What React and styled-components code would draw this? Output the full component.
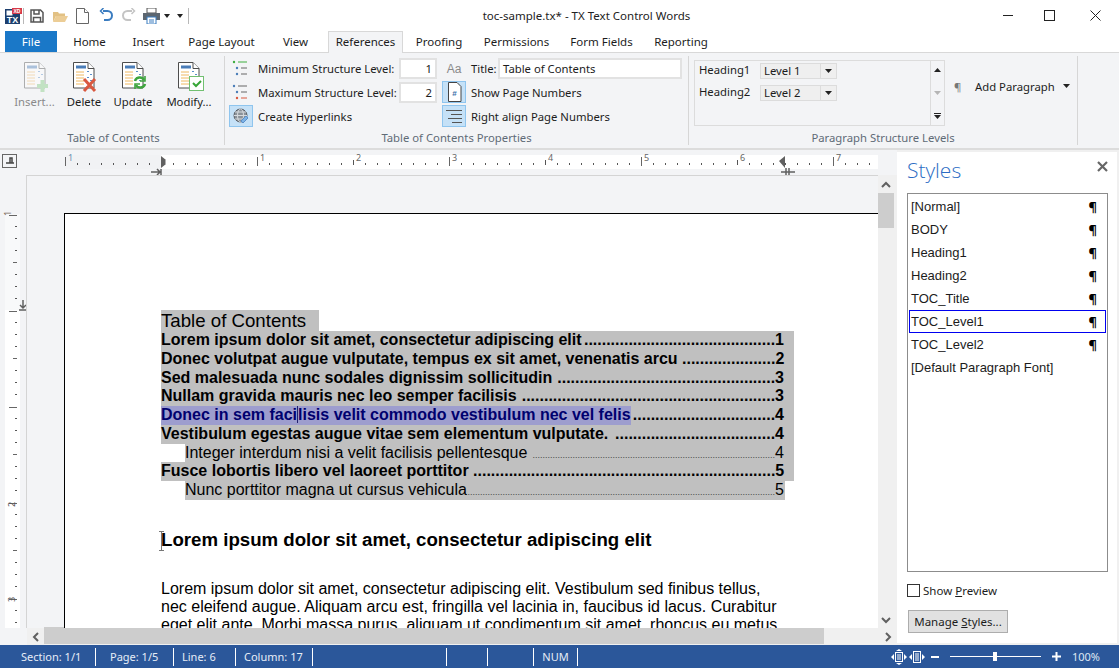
import React from 'react'
import styled, { createGlobalStyle } from 'styled-components'

const GlobalStyle = createGlobalStyle`
  html, body { margin: 0; padding: 0; background: #fff; }
  * { box-sizing: border-box; }
`

const uiFont = `"Noto Sans", "Open Sans", sans-serif`
const docFont = `"Liberation Sans", Arial, sans-serif`

const Window = styled.div`
  width: 1119px;
  height: 668px;
  display: flex;
  flex-direction: column;
  overflow: hidden;
  background: #fff;
  color: #1c1c1c;
  font-family: ${uiFont};
  font-size: 11.5px;
`

/* title bar */
const TitleBar = styled.div`
  height: 31px;
  flex: none;
  display: grid;
  grid-template-columns: 1fr auto 1fr;
  align-items: center;
`

const QuickAccess = styled.div`
  display: flex;
  align-items: center;
  padding-left: 5px;
  height: 100%;
`

const QuickIcon = styled.svg`
  display: block;
  flex: none;
  margin-right: ${p => p.$gap || 0}px;
`

const QuickSep = styled.div`
  width: 1px;
  height: 16px;
  background: #b8b8b8;
  margin: 0 6px 0 ${p => p.$left ?? 5}px;
`

const WindowTitle = styled.div`
  font-size: 11.5px;
  color: #222;
  white-space: nowrap;
  padding-left: 54px;
`

const WindowButtons = styled.div`
  display: flex;
  justify-content: flex-end;
  height: 100%;
  padding-right: 1px;
`

const WindowButton = styled.div`
  width: ${p => p.$w || 46}px;
  display: flex;
  align-items: center;
  justify-content: center;
  padding-bottom: 1px;
`

/* tabs */
const TabRow = styled.div`
  height: 22px;
  flex: none;
  display: flex;
  padding-left: 5px;
  border-bottom: 1px solid #d8d8d8;
`

const Tab = styled.div`
  width: ${p => p.$w}px;
  margin-left: ${p => (p.$active ? 5 : 0)}px;
  height: ${p => (p.$active ? 22 : 21)}px;
  display: flex;
  align-items: center;
  justify-content: center;
  padding-bottom: 2px;
  white-space: nowrap;
  color: ${p => (p.$file ? '#fff' : '#1c1c1c')};
  background: ${p => (p.$file ? '#1a78c8' : p.$active ? '#f3f4f6' : 'transparent')};
  border: 1px solid ${p => (p.$active ? '#d8d8d8' : 'transparent')};
  border-bottom: none;
  position: relative;
`

/* ribbon */
const Ribbon = styled.div`
  height: 97px;
  flex: none;
  display: flex;
  padding: 3px 0 0 3px;
  background: #f3f4f6;
  border-bottom: 2px solid #dcdcdc;
  font-size: 11.3px;
`

const Group = styled.div`
  width: ${p => p.$w}px;
  flex: none;
  display: flex;
  flex-direction: column;
  border-right: ${p => (p.$last ? 'none' : '1px solid #d6d6d6')};
  margin-bottom: 3px;
`

const GroupBody = styled.div`
  height: 76px;
  display: flex;
`

const GroupLabel = styled.div`
  text-align: center;
  color: #5f6b76;
  line-height: 15px;
`

const LargeButton = styled.div`
  width: ${p => p.$w}px;
  display: flex;
  flex-direction: column;
  align-items: center;
  padding-top: 5px;
  color: ${p => (p.$off ? '#8a8a8a' : '#1c1c1c')};
`

const LargeLabel = styled.div`
  margin-top: 1px;
  white-space: nowrap;
`

const OptionColumn = styled.div`
  display: flex;
  flex-direction: column;
  gap: 2px;
  padding: 1px 0 0 ${p => p.$left || 0}px;
  width: ${p => p.$w}px;
`

const OptionRow = styled.div`
  height: 22px;
  display: flex;
  align-items: center;
  white-space: nowrap;
`

const IconCell = styled.div`
  width: 24px;
  height: 22px;
  flex: none;
  display: flex;
  align-items: center;
  justify-content: center;
  margin-right: 5px;
  background: ${p => (p.$on ? '#c5e1f7' : 'transparent')};
  border: 1px solid ${p => (p.$on ? '#8fc5ee' : 'transparent')};
`

const LevelLabel = styled.span`
  width: 141px;
  flex: none;
`

const TextField = styled.div`
  width: ${p => p.$w}px;
  height: 21px;
  display: flex;
  align-items: center;
  justify-content: ${p => (p.$right ? 'flex-end' : 'flex-start')};
  padding: 0 3px;
  background: #fff;
  border: 2px solid #e2e2e2;
  white-space: nowrap;
`

const TitleLabel = styled.span`
  width: 27px;
  flex: none;
`

const Gallery = styled.div`
  width: 251px;
  height: 66px;
  margin: 4px 0 0 5px;
  display: flex;
  border: 1px solid #dcdcdc;
  flex: none;
`

const GalleryList = styled.div`
  flex: 1;
  display: flex;
  flex-direction: column;
  gap: 6px;
  padding: 2px 0 0 4px;
`

const GalleryRow = styled.div`
  height: 16px;
  display: flex;
  align-items: center;
`

const GalleryName = styled.span`
  width: 61px;
  padding-bottom: 3px;
`

const LevelCombo = styled.div`
  width: 77px;
  height: 16px;
  display: flex;
  align-items: center;
  background: #efefef;
  border: 1px solid #dcdcdc;
  padding-left: 3px;
`

const ComboText = styled.span`
  flex: 1;
  padding-bottom: 2px;
`

const ComboArrow = styled.div`
  width: 16px;
  height: 100%;
  display: flex;
  align-items: center;
  justify-content: center;
  border-left: 1px solid #dcdcdc;
`

const GalleryScroll = styled.div`
  width: 14px;
  display: flex;
  flex-direction: column;
  align-items: center;
  justify-content: space-between;
  padding: 7px 0 6px;
  border-left: 1px solid #dcdcdc;
`

const AddParagraph = styled.div`
  display: flex;
  align-items: center;
  height: 22px;
  margin: 19px 0 0 9px;
  white-space: nowrap;
`

const Pilcrow = styled.span`
  width: 21px;
  color: #777;
`

const AddText = styled.span`
  width: 88px;
`

/* workspace */
const Main = styled.div`
  flex: 1;
  min-height: 0;
  display: flex;
  background: #f0f0f0;
`

const Workspace = styled.div`
  width: 897px;
  flex: none;
  display: flex;
  flex-direction: column;
  background: #f3f4f6;
`

const RulerRow = styled.div`
  height: 25px;
  flex: none;
  background: #f3f4f6;
`

const RulerSvg = styled.svg`
  display: block;
`

const DocRow = styled.div`
  flex: 1;
  min-height: 0;
  display: flex;
`

const SideRuler = styled.div`
  width: 26px;
  flex: none;
  overflow: hidden;
`

const DocView = styled.div`
  flex: 1;
  min-width: 0;
  overflow: hidden;
  padding: 37px 0 0 37px;
  border-top: 1px solid #d4d4d4;
  border-left: 1px solid #d4d4d4;
`

const Page = styled.div`
  position: relative;
  background: #fff;
  border-top: 1px solid #000;
  border-left: 1px solid #000;
  padding: 96px 0 0 96px;
  height: 600px;
  font-family: ${docFont};
  color: #000;
`

const TocTitle = styled.div`
  width: 158px;
  height: 21px;
  background: #c0c0c0;
  font-size: 18.67px;
  line-height: 21px;
  white-space: nowrap;
`

const TocRow = styled.div`
  display: flex;
  align-items: baseline;
  height: 18.75px;
  line-height: 18.75px;
  width: ${p => (p.$short ? 600 : p.$indent ? 609 : 633)}px;
  margin-left: ${p => (p.$indent ? 24 : 0)}px;
  padding-right: ${p => (p.$short ? 1 : 10)}px;
  background: #c0c0c0;
  font-size: 16px;
  font-weight: ${p => (p.$indent ? 400 : 700)};
  white-space: pre;
`

const TocLeader = styled.span`
  flex: 1;
  text-align: right;
  color: ${p => (p.$soft ? '#444' : '#000')};
  font-size: ${p => (p.$soft ? 9 : 16)}px;
`

const Highlight = styled.span`
  background: #9d9dce;
  color: #00006e;
`

const Caret = styled.span`
  display: inline-block;
  width: 0;
  height: 17px;
  margin-bottom: -3px;
  border-left: 1px solid #22226e;
`

const DocHeading = styled.div`
  margin-top: 29px;
  font-size: 18.67px;
  font-weight: 700;
  white-space: nowrap;
`

const DocBody = styled.div`
  margin-top: 29px;
  font-size: 16px;
  white-space: nowrap;
`

const IBeam = styled.svg`
  position: absolute;
  left: 94px;
  top: 317px;
`

const VScroll = styled.div`
  width: 19px;
  flex: none;
  display: flex;
  flex-direction: column;
  background: #f0f0f0;
  padding: 1px 3px 0 0;
`

const VArrow = styled.div`
  height: 17px;
  flex: none;
  display: flex;
  align-items: center;
  justify-content: center;
`

const VThumb = styled.div`
  height: 35px;
  flex: none;
  background: #cdcdcd;
`

const VTrack = styled.div`
  flex: 1;
`

const HScroll = styled.div`
  height: 17px;
  flex: none;
  display: flex;
  align-items: center;
  margin-left: 27px;
  background: #f0f0f0;
  padding-right: 1px;
`

const HArrow = styled.div`
  width: 17px;
  height: 100%;
  flex: none;
  display: flex;
  align-items: center;
  justify-content: center;
`

const HThumb = styled.div`
  width: 780px;
  height: 100%;
  margin-bottom: 2px;
  flex: none;
  background: #cdcdcd;
`

const HTrack = styled.div`
  flex: 1;
`

/* styles pane */
const StylesPane = styled.div`
  width: 220px;
  flex: none;
  margin-top: 2px;
  margin-bottom: 2px;
  display: flex;
  flex-direction: column;
  background: #fff;
  padding: 0 9px 0 10px;
`

const PaneHeader = styled.div`
  height: 41px;
  flex: none;
  display: flex;
  align-items: center;
  justify-content: space-between;
`

const PaneTitle = styled.div`
  font-family: "Open Sans", sans-serif;
  font-weight: 300;
  font-size: 21px;
  color: #2b6cc4;
  padding-bottom: 6px;
`

const PaneClose = styled.svg`
  margin-bottom: 13px;
`

const StyleList = styled.div`
  height: 379px;
  flex: none;
  border: 1px solid #8c8c8c;
  padding: 1px 1px 0;
  font-family: ${docFont};
  font-size: 13px;
`

const StyleRow = styled.div`
  height: 23px;
  display: flex;
  align-items: center;
  justify-content: space-between;
  padding: 0 8px 0 1px;
  border: 1px solid ${p => (p.$selected ? '#0000f0' : 'transparent')};
  white-space: nowrap;
`

const StyleMark = styled.span`
  font-family: ${uiFont};
  font-weight: 700;
  color: #000;
`

const Preview = styled.label`
  display: flex;
  align-items: center;
  gap: 3px;
  margin: 11px 0 0 0;
  height: 14px;
`

const CheckBox = styled.span`
  width: 13px;
  height: 13px;
  border: 1px solid #333;
  background: #fff;
`

const ManageButton = styled.div`
  width: 100px;
  height: 23px;
  margin: 13px 0 0 1px;
  display: flex;
  align-items: center;
  justify-content: center;
  background: #e1e1e1;
  border: 1px solid #adadad;
`

const Mnemonic = styled.span`
  text-decoration: underline;
`

/* status bar */
const StatusBar = styled.div`
  height: 23px;
  flex: none;
  display: flex;
  align-items: center;
  background: #2b579a;
  color: #fff;
  font-size: 11px;
`

const StatusCell = styled.div`
  width: ${p => p.$w}px;
  height: 18px;
  flex: none;
  display: flex;
  align-items: center;
  justify-content: ${p => (p.$center ? 'center' : 'flex-start')};
  padding-left: ${p => (p.$center ? 0 : p.$pad || 0)}px;
  border-right: 1px solid #fff;
  white-space: nowrap;
  color: #e6edf7;
`

const StatusSpacer = styled.div`
  flex: 1;
`

const ZoomTools = styled.div`
  display: flex;
  align-items: center;
  padding-right: 19px;
`

const ZoomSlider = styled.div`
  width: 91px;
  height: 1px;
  background: #fff;
  margin: 0 11px 0 9px;
  position: relative;
`

const ZoomKnob = styled.div`
  position: absolute;
  left: 43px;
  top: -4px;
  width: 4px;
  height: 9px;
  background: #fff;
`

const ZoomValue = styled.span`
  margin-left: 11px;
  color: #dfe7f3;
`

const ZoomIcon = styled.svg`
  display: block;
  margin-right: ${p => p.$gap || 0}px;
`

/* drawings */
const DocIcon = ({ kind, off }) => (
  <svg width="30" height="32" viewBox="-2 0 30 32" style={{ opacity: off ? 0.42 : 1, display: 'block' }}>
    <path d="M2.5 1.5H17l6 6V27H2.5z" fill="#fff" stroke="#4d4d4d" />
    <path d="M17 1.5V7.5H23" fill="#fff" stroke="#4d4d4d" />
    <rect x="5" y="4.5" width="10" height="3" fill="#4a7db8" />
    <path d="M5 11h8M5 14h8M5 17h8M5 20h8M5 23h8" stroke="#f0b860" />
    <path d="M16 10.5h2M19 13.5h2M16 16.5h2M19 19.5h2" stroke="#5a8fca" />
    {kind === 'plus' && <path d="M15 25h11M20.500 19v12" stroke="#7fcb7f" strokeWidth="4" />}
    {kind === 'x' && <path d="M13 18l11 12M24 18L13 30" stroke="#d9583f" strokeWidth="3" />}
    {kind === 'sync' && (
      <g fill="none" stroke="#3ea53e" strokeWidth="2.500">
        <path d="M15 20c1-4 7-5 9-1" />
        <path d="M25 23c-1 4-7 5-9 1" />
        <path d="M25 15v5h-5M15 28v-5h5" strokeWidth="1.600" />
      </g>
    )}
    {kind === 'check' && (
      <g>
        <rect x="13.500" y="15.500" width="14" height="14" fill="#fff" stroke="#71c071" />
        <path d="M17 22l3 3 5-5" fill="none" stroke="#37a637" strokeWidth="2" />
      </g>
    )}
  </svg>
)

const ListIcon = ({ top, bottom }) => (
  <svg width="18" height="16" viewBox="0 0 18 16">
    <circle cx="2" cy="2" r="1.200" fill={top || '#4a7db8'} />
    <path d="M6 2h9" stroke={top || '#666'} />
    <circle cx="5" cy="8" r="1.200" fill="#4a7db8" />
    <path d="M9 8h6" stroke="#666" />
    <circle cx="5" cy="14" r="1.200" fill={bottom || '#4a7db8'} />
    <path d="M9 14h6" stroke={bottom || '#666'} />
  </svg>
)

const GlobeIcon = () => (
  <svg width="16" height="16" viewBox="0 0 16 16" fill="none" stroke="#5a5f66">
    <circle cx="7.500" cy="7.500" r="6.500" fill="#8b9299" />
    <ellipse cx="7.500" cy="7.500" rx="3" ry="6.500" stroke="#d6dade" />
    <path d="M1 7.500h13M2 4h11M2 11h11" stroke="#d6dade" />
    <path d="M8 13l5-5 2 2-5 5z" fill="#7eb4e6" stroke="#5a8fca" />
  </svg>
)

const PageNumberIcon = () => (
  <svg width="15" height="20" viewBox="0 0 15 20">
    <path d="M1.500.5H10l4 4v15H1.500z" fill="#fff" stroke="#444" />
    <text x="7.500" y="14" textAnchor="middle" fontSize="8" fontWeight="700" fill="#3a6ea8" fontFamily="Liberation Sans">#</text>
  </svg>
)

const RightAlignIcon = () => (
  <svg width="16" height="13" viewBox="0 0 16 13" stroke="#555">
    <path d="M0 .5h16M5 4.500h11M2 8.500h14M6 12.500h10" />
  </svg>
)

const DownTri = ({ color = '#222', w = 7 }) => (
  <svg width={w} height="4" viewBox="0 0 7 4">
    <path d="M0 0h7L3.500 4z" fill={color} />
  </svg>
)

const TxLogo = () => (
  <QuickIcon width="18" height="16" viewBox="0 0 18 16">
    <rect x="0" y="1" width="15" height="15" fill="#1d3f6e" />
    <rect x="1.500" y="2.500" width="6" height="5" fill="#fff" />
    <rect x="7" y="0" width="10" height="6" fill="#d63a4a" />
    <text x="12" y="5" textAnchor="middle" fontSize="5" fontWeight="700" fill="#fff" fontFamily="Liberation Sans">XD</text>
    <text x="7.500" y="15" textAnchor="middle" fontSize="9" fontWeight="700" fill="#fff" fontFamily="Liberation Sans">TX</text>
  </QuickIcon>
)

const QuickIcons = () => (
  <>
    <QuickIcon width="14" height="14" viewBox="0 0 14 14" $gap={9} fill="none" stroke="#555" strokeWidth="1.500">
      <path d="M1 1h9.500L13 3.500V13H1z" />
      <path d="M4 1v4h5V1M3.500 13V8.500h7V13" />
    </QuickIcon>
    <QuickIcon width="15" height="12" viewBox="0 0 15 12" $gap={8}>
      <path d="M0 2h5l1 1.500h6V6H3L0 12z" fill="#e2c184" />
      <path d="M3 6h12l-3 6H0z" fill="#eccd96" />
    </QuickIcon>
    <QuickIcon width="13" height="16" viewBox="0 0 13 16" $gap={10} fill="#fff" stroke="#666">
      <path d="M.5.500H8.500L12.500 4.500V15.500H.5z" />
      <path d="M8.500.500V4.500H12.500" />
    </QuickIcon>
    <QuickIcon width="14" height="15" viewBox="0 0 14 15" $gap={9} fill="none" stroke="#3a7cc0" strokeWidth="2">
      <path d="M4 3h4.500a4.500 4.500 0 0 1 0 9H5" />
      <path d="M4.500 0L1.500 3l3 3" strokeWidth="1.500" />
    </QuickIcon>
    <QuickIcon width="14" height="15" viewBox="0 0 14 15" $gap={7} fill="none" stroke="#c4c4c4" strokeWidth="2">
      <path d="M10 3H5.500a4.500 4.500 0 0 0 0 9H9" />
      <path d="M9.500 0l3 3-3 3" strokeWidth="1.500" />
    </QuickIcon>
    <QuickIcon width="17" height="16" viewBox="0 0 17 16" $gap={4}>
      <rect x="4" y="0" width="9" height="5" fill="#fff" stroke="#555" />
      <rect x="0" y="5" width="17" height="7" fill="#5c6670" />
      <rect x="4" y="9" width="9" height="7" fill="#fff" stroke="#3a7cc0" />
      <path d="M6 12h5M6 14h5" stroke="#3a7cc0" />
    </QuickIcon>
    <QuickIcon width="6" height="4" viewBox="0 0 6 4" $gap={7}><path d="M0 0h6L3 4z" fill="#222" /></QuickIcon>
    <QuickIcon width="6" height="4" viewBox="0 0 6 4"><path d="M0 0h6L3 4z" fill="#222" /></QuickIcon>
  </>
)

const TopRuler = () => {
  const ticks = []
  for (let i = 0; i <= 67; i++) {
    const x = 65 + i * 12
    if (i % 16 === 8) ticks.push(<path key={i} d={`M${x + 0.5} 160v5`} stroke="#555" />)
    else if (i % 16 === 0) ticks.push(<path key={i} d={`M${x + 0.5} 157v9`} stroke="#666" />)
    else if (i % 8 !== 0) ticks.push(<rect key={i} x={x} y={163} width="1" height="2" fill="#555" />)
  }
  const labels = [1, 2, 3, 4, 5, 6, 7]
  return (
    <RulerSvg width="897" height="25" viewBox="0 150 897 25">
      <rect x="2.500" y="154.500" width="14" height="13" fill="#f3f4f6" stroke="#666" />
      <path d="M6 163h8M10 163v-5h2v5" stroke="#444" strokeWidth="1.500" fill="none" />
      <rect x="65" y="155" width="96" height="14" fill="#f1f2f4" />
      <rect x="161" y="155" width="717" height="14" fill="#fff" />
      {ticks}
      <text x="68" y="161" fontSize="9" fontFamily="Noto Sans" fill="#6b8fb0">1</text>
      {labels.map(n => (
        <text key={n} x={164 + n * 96} y="161" fontSize="9" fontFamily="Noto Sans" fill="#666">{n}</text>
      ))}
      <path d="M161 156l5 4-1 1 1 1-1 1 1 1-5 4z" fill="#606060" />
      <path d="M151 172h9M157 169l3 3-3 3M161 169v7" stroke="#606060" strokeWidth="1.500" fill="none" />
      <path d="M785 156l-6 5 6 7z" fill="#606060" />
      <path d="M781 172h14M786 168v8M789 168v8" stroke="#606060" strokeWidth="1.500" fill="none" />
    </RulerSvg>
  )
}

const LeftRuler = () => {
  const ticks = []
  for (let i = 0; i <= 34; i++) {
    const y = 214 + i * 12
    if (i % 8 === 0) ticks.push(<path key={i} d={`M9 ${y + 1.5}h8`} stroke="#666" />)
    else if (i % 4 === 0) ticks.push(<path key={i} d={`M13 ${y + 0.5}h4`} stroke="#666" />)
    else ticks.push(<rect key={i} x="15" y={y} width="2" height="1" fill="#555" />)
  }
  return (
    <RulerSvg width="26" height="469" viewBox="0 175 26 469">
      <rect x="5" y="214" width="15" height="96" fill="#f8f9fa" />
      <rect x="5" y="310" width="15" height="320" fill="#fff" />
      {ticks}
      <text x="12" y="221" fontSize="9" fontFamily="Noto Sans" fill="#7f6f5f" transform="rotate(-90 9 219)">1</text>
      <text x="9" y="509" fontSize="9" fontFamily="Noto Sans" fill="#555" transform="rotate(-90 11 505)">2</text>
      <text x="9" y="604" fontSize="9" fontFamily="Noto Sans" fill="#555" transform="rotate(-90 11 600)">3</text>
      <path d="M23 300v8M20 305l3 3 3-3M19 310h8" stroke="#606060" strokeWidth="1.500" fill="none" />
    </RulerSvg>
  )
}

const Chevron = ({ d }) => (
  <svg width="10" height="10" viewBox="0 0 10 10" fill="none" stroke="#606060" strokeWidth="2">
    <path d={d} />
  </svg>
)

const tabs = [
  { label: 'File', w: 52, file: true },
  { label: 'Home', w: 65 },
  { label: 'Insert', w: 53 },
  { label: 'Page Layout', w: 93 },
  { label: 'View', w: 55 },
  { label: 'References', w: 75, active: true },
  { label: 'Proofing', w: 72 },
  { label: 'Permissions', w: 83 },
  { label: 'Form Fields', w: 87 },
  { label: 'Reporting', w: 72 },
]

const tocRows = [
  { text: 'Lorem ipsum dolor sit amet, consectetur adipiscing elit', page: 1, dots: 43 },
  { text: 'Donec volutpat augue vulputate, tempus ex sit amet, venenatis arcu ', page: 2, dots: 21 },
  { text: 'Sed malesuada nunc sodales dignissim sollicitudin ', page: 3, dots: 49 },
  { text: 'Nullam gravida mauris nec leo semper facilisis ', page: 3, dots: 57 },
  { current: true, page: 4, dots: 32 },
  { text: 'Vestibulum egestas augue vitae sem elementum vulputate. ', page: 4, dots: 36 },
  { text: 'Integer interdum nisi a velit facilisis pellentesque ', page: 4, dots: 97, indent: true },
  { text: 'Fusce lobortis libero vel laoreet porttitor ', page: 5, dots: 68 },
  { text: 'Nunc porttitor magna ut cursus vehicula', page: 5, dots: 123, indent: true, short: true },
]

const styleNames = ['[Normal]', 'BODY', 'Heading1', 'Heading2', 'TOC_Title', 'TOC_Level1', 'TOC_Level2', '[Default Paragraph Font]']

export default function App() {
  return (
    <Window>
      <GlobalStyle />
      <TitleBar>
        <QuickAccess>
          <TxLogo />
          <QuickSep $left={0} />
          <QuickIcons />
          <QuickSep $left={5} />
        </QuickAccess>
        <WindowTitle>toc-sample.tx* - TX Text Control Words</WindowTitle>
        <WindowButtons>
          <WindowButton $w={36}>
            <svg width="11" height="11" viewBox="0 0 11 11"><path d="M0 5.500h10" stroke="#222" /></svg>
          </WindowButton>
          <WindowButton>
            <svg width="11" height="11" viewBox="0 0 11 11"><rect x=".5" y=".5" width="10" height="10" fill="none" stroke="#222" /></svg>
          </WindowButton>
          <WindowButton>
            <svg width="11" height="11" viewBox="0 0 11 11"><path d="M.5.5l10 10M10.500.5l-10 10" stroke="#222" /></svg>
          </WindowButton>
        </WindowButtons>
      </TitleBar>

      <TabRow>
        {tabs.map(t => (
          <Tab key={t.label} $w={t.w} $file={t.file} $active={t.active}>{t.label}</Tab>
        ))}
      </TabRow>

      <Ribbon>
        <Group $w={222}>
          <GroupBody>
            <LargeButton $w={63} $off>
              <DocIcon kind="plus" off />
              <LargeLabel>Insert...</LargeLabel>
            </LargeButton>
            <LargeButton $w={36}>
              <DocIcon kind="x" />
              <LargeLabel>Delete</LargeLabel>
            </LargeButton>
            <LargeButton $w={62}>
              <DocIcon kind="sync" />
              <LargeLabel>Update</LargeLabel>
            </LargeButton>
            <LargeButton $w={50}>
              <DocIcon kind="check" />
              <LargeLabel>Modify...</LargeLabel>
            </LargeButton>
          </GroupBody>
          <GroupLabel>Table of Contents</GroupLabel>
        </Group>

        <Group $w={464}>
          <GroupBody>
            <OptionColumn $w={217} $left={4}>
              <OptionRow>
                <IconCell><ListIcon top="#3fae3f" /></IconCell>
                <LevelLabel>Minimum Structure Level:</LevelLabel>
                <TextField $w={38} $right>1</TextField>
              </OptionRow>
              <OptionRow>
                <IconCell><ListIcon bottom="#d9583f" /></IconCell>
                <LevelLabel>Maximum Structure Level:</LevelLabel>
                <TextField $w={38} $right>2</TextField>
              </OptionRow>
              <OptionRow>
                <IconCell $on><GlobeIcon /></IconCell>
                <span>Create Hyperlinks</span>
              </OptionRow>
            </OptionColumn>
            <OptionColumn $w={245}>
              <OptionRow>
                <IconCell>
                  <svg width="20" height="15" viewBox="0 0 20 15">
                    <text x="10" y="12" textAnchor="middle" fontSize="12" fill="#8a8a8a" fontFamily="Liberation Sans">Aa</text>
                  </svg>
                </IconCell>
                <TitleLabel>Title:</TitleLabel>
                <TextField $w={184}>Table of Contents</TextField>
              </OptionRow>
              <OptionRow>
                <IconCell $on><PageNumberIcon /></IconCell>
                <span>Show Page Numbers</span>
              </OptionRow>
              <OptionRow>
                <IconCell $on><RightAlignIcon /></IconCell>
                <span>Right align Page Numbers</span>
              </OptionRow>
            </OptionColumn>
          </GroupBody>
          <GroupLabel>Table of Contents Properties</GroupLabel>
        </Group>

        <Group $w={389}>
          <GroupBody>
            <Gallery>
              <GalleryList>
                <GalleryRow>
                  <GalleryName>Heading1</GalleryName>
                  <LevelCombo><ComboText>Level 1</ComboText><ComboArrow><DownTri /></ComboArrow></LevelCombo>
                </GalleryRow>
                <GalleryRow>
                  <GalleryName>Heading2</GalleryName>
                  <LevelCombo><ComboText>Level 2</ComboText><ComboArrow><DownTri /></ComboArrow></LevelCombo>
                </GalleryRow>
              </GalleryList>
              <GalleryScroll>
                <svg width="7" height="4" viewBox="0 0 7 4"><path d="M0 4h7L3.500 0z" fill="#222" /></svg>
                <DownTri color="#b5b5b5" />
                <svg width="7" height="6" viewBox="0 0 7 6"><path d="M0 0h7v1H0zM0 2h7L3.500 6z" fill="#222" /></svg>
              </GalleryScroll>
            </Gallery>
            <AddParagraph>
              <Pilcrow>¶</Pilcrow>
              <AddText>Add Paragraph</AddText>
              <DownTri />
            </AddParagraph>
          </GroupBody>
          <GroupLabel>Paragraph Structure Levels</GroupLabel>
        </Group>
      </Ribbon>

      <Main>
        <Workspace>
          <RulerRow><TopRuler /></RulerRow>
          <DocRow>
            <SideRuler><LeftRuler /></SideRuler>
            <DocView>
              <Page>
                <TocTitle>Table of Contents</TocTitle>
                {tocRows.map(r => (
                  <TocRow key={r.page + (r.text || 'current')} $indent={r.indent} $short={r.short}>
                    {r.current ? (
                      <Highlight>Donec in sem faci<Caret />lisis velit commodo vestibulum nec vel felis</Highlight>
                    ) : (
                      <span>{r.text}</span>
                    )}
                    <TocLeader $soft={r.indent}>{'.'.repeat(r.dots)}</TocLeader>
                    <span>{r.page}</span>
                  </TocRow>
                ))}
                <DocHeading>Lorem ipsum dolor sit amet, consectetur adipiscing elit</DocHeading>
                <DocBody>
                  Lorem ipsum dolor sit amet, consectetur adipiscing elit. Vestibulum sed finibus tellus,<br />
                  nec eleifend augue. Aliquam arcu est, fringilla vel lacinia in, faucibus id lacus. Curabitur<br />
                  eget elit ante. Morbi massa purus, aliquam ut condimentum sit amet, rhoncus eu metus.
                </DocBody>
                <IBeam width="5" height="20" viewBox="0 0 5 20" fill="none" stroke="#777">
                  <path d="M0 .5h5M0 19.500h5M2.500 0v20" />
                </IBeam>
              </Page>
            </DocView>
            <VScroll>
              <VArrow><Chevron d="M1 7l4-4 4 4" /></VArrow>
              <VThumb />
              <VTrack />
              <VArrow><Chevron d="M1 3l4 4 4-4" /></VArrow>
            </VScroll>
          </DocRow>
          <HScroll>
            <HArrow><Chevron d="M7 1L3 5l4 4" /></HArrow>
            <HThumb />
            <HTrack />
            <HArrow><Chevron d="M3 1l4 4-4 4" /></HArrow>
          </HScroll>
        </Workspace>

        <StylesPane>
          <PaneHeader>
            <PaneTitle>Styles</PaneTitle>
            <PaneClose width="11" height="11" viewBox="0 0 11 11" stroke="#666" strokeWidth="2.200"><path d="M1 1l9 9M10 1l-9 9" /></PaneClose>
          </PaneHeader>
          <StyleList>
            {styleNames.map(n => (
              <StyleRow key={n} $selected={n === 'TOC_Level1'}>
                <span>{n}</span>
                {n[0] !== '[' || n === '[Normal]' ? <StyleMark>¶</StyleMark> : null}
              </StyleRow>
            ))}
          </StyleList>
          <Preview>
            <CheckBox />
            <span>Show <Mnemonic>P</Mnemonic>review</span>
          </Preview>
          <ManageButton><span>Manage <Mnemonic>S</Mnemonic>tyles...</span></ManageButton>
        </StylesPane>
      </Main>

      <StatusBar>
        <StatusCell $w={96} $pad={21}>Section: 1/1</StatusCell>
        <StatusCell $w={78} $pad={14}>Page: 1/5</StatusCell>
        <StatusCell $w={62} $pad={8}>Line: 6</StatusCell>
        <StatusCell $w={77} $pad={8}>Column: 17</StatusCell>
        <StatusCell $w={134} />
        <StatusCell $w={41} />
        <StatusCell $w={46} />
        <StatusCell $w={44} $center>NUM</StatusCell>
        <StatusSpacer />
        <ZoomTools>
          <ZoomIcon width="16" height="16" viewBox="0 0 16 16" $gap={2}>
            <rect x="4.500" y="3.500" width="7" height="9" fill="none" stroke="#fff" />
            <path d="M6 6h4M6 8h4M6 10h4" stroke="#fff" />
            <path d="M0 8l3-3v6zM16 8l-3-3v6zM5 2l3-2 3 2zM5 14l3 2 3-2z" fill="#fff" />
          </ZoomIcon>
          <ZoomIcon width="16" height="14" viewBox="0 0 16 14">
            <rect x="4.500" y="1.500" width="7" height="11" fill="none" stroke="#fff" />
            <path d="M6 4h4M6 6h4M6 8h4M6 10h4" stroke="#fff" />
            <path d="M0 7l3-3v6zM16 7l-3-3v6z" fill="#fff" />
          </ZoomIcon>
          <svg width="16" height="10" viewBox="0 0 16 10" stroke="#fff" strokeWidth="2"><path d="M6 5h8" /></svg>
          <ZoomSlider><ZoomKnob /></ZoomSlider>
          <svg width="9" height="9" viewBox="0 0 9 9" stroke="#fff" strokeWidth="2"><path d="M0 4.500h9M4.500 0v9" /></svg>
          <ZoomValue>100%</ZoomValue>
        </ZoomTools>
      </StatusBar>
    </Window>
  )
}
